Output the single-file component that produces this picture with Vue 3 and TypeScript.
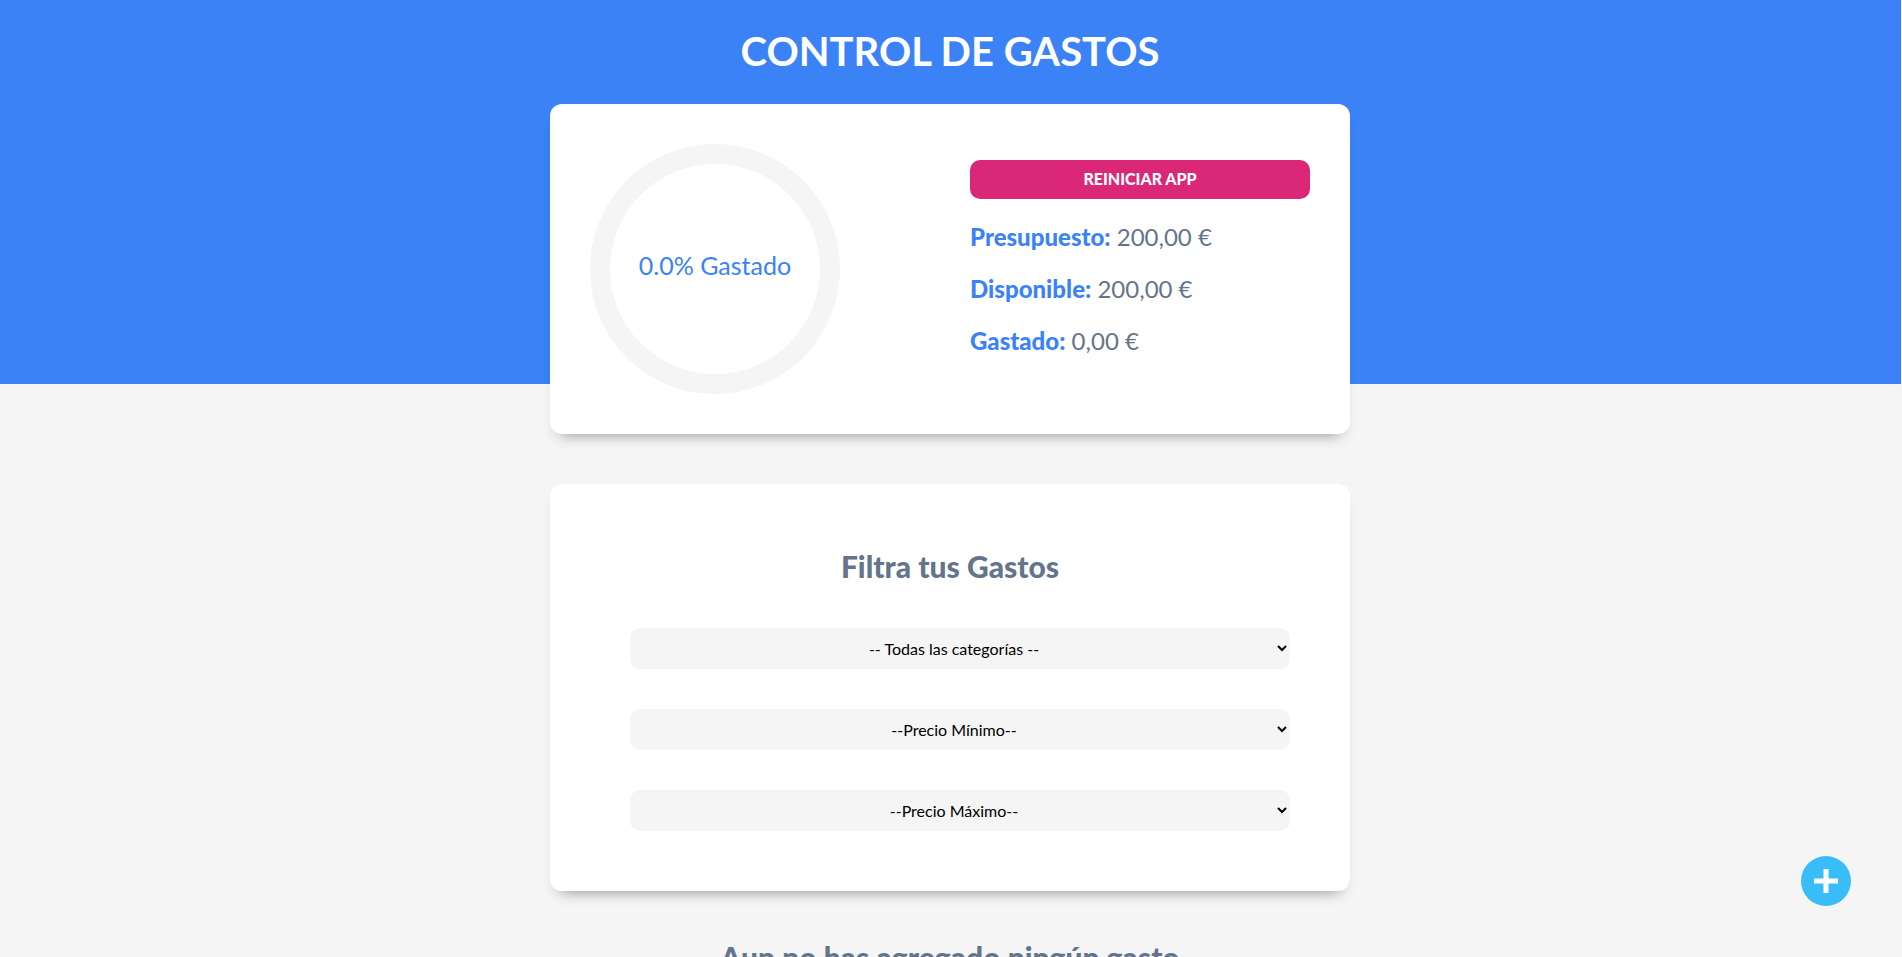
<script setup lang="ts">
import { ref } from 'vue'

interface Filtro {
  id: string
  etiqueta: string
  vacio: string
  opciones: string[]
}

const presupuesto = ref(200)
const gastado = ref(0)
const filtros: Filtro[] = [
  { id: 'categoria', etiqueta: 'Categoría', vacio: '-- Todas las categorías --', opciones: ['Ahorro', 'Comida', 'Casa', 'Ocio', 'Salud'] },
  { id: 'minimo', etiqueta: 'Precio mínimo', vacio: '--Precio Mínimo--', opciones: ['0', '50', '100'] },
  { id: 'maximo', etiqueta: 'Precio máximo', vacio: '--Precio Máximo--', opciones: ['50', '100', '200'] },
]

const euros = (n: number): string => `${n.toFixed(2).replace('.', ',')} €`
const reiniciar = (): void => {
  gastado.value = 0
}
</script>

<template>
  <div class="app">
    <header class="cabecera">
      <h1>Control de Gastos</h1>
      <section class="tarjeta presupuesto">
        <div class="grafica">
          <svg viewBox="0 0 100 100" aria-hidden="true">
            <circle cx="50" cy="50" r="46" fill="none" stroke="#f5f5f5" stroke-width="8" />
          </svg>
          <span>{{ ((gastado / presupuesto) * 100).toFixed(1) }}% Gastado</span>
        </div>
        <div class="datos">
          <button class="reiniciar" type="button" @click="reiniciar">Reiniciar App</button>
          <p><strong>Presupuesto:</strong> {{ euros(presupuesto) }}</p>
          <p><strong>Disponible:</strong> {{ euros(presupuesto - gastado) }}</p>
          <p><strong>Gastado:</strong> {{ euros(gastado) }}</p>
        </div>
      </section>
    </header>
    <main>
      <form class="tarjeta filtros">
        <h2>Filtra tus Gastos</h2>
        <div class="campos">
          <select v-for="f in filtros" :id="f.id" :key="f.id" :aria-label="f.etiqueta">
            <option value="">{{ f.vacio }}</option>
            <option v-for="o in f.opciones" :key="o" :value="o">{{ o }}</option>
          </select>
        </div>
      </form>
      <h2 class="vacio">Aun no has agregado ningún gasto</h2>
    </main>
    <button class="nuevo" type="button" aria-label="Nuevo gasto">
      <svg viewBox="0 0 50 50" aria-hidden="true">
        <circle cx="25" cy="25" r="25" fill="#38bdf8" />
        <path d="M25 13v24M13 25h24" stroke="#fff" stroke-width="5" />
      </svg>
    </button>
  </div>
</template>

<style>
html {
  background: #f5f5f5;
}
body {
  margin: 0;
  height: 100vh;
  overflow: hidden;
}
</style>

<style scoped>
.app,
.app * {
  box-sizing: border-box;
}
.app {
  margin-right: 1px;
  font-family: Lato, "Liberation Sans", sans-serif;
  color: #64748b;
}
.cabecera,
main {
  padding-right: 1px;
}
.cabecera {
  height: 384px;
  background: #3b82f6;
}
h1 {
  margin: 0;
  padding: 25px 0 27px;
  font-size: 40px;
  line-height: 52px;
  font-weight: 700;
  text-align: center;
  text-transform: uppercase;
  color: #fff;
}
.tarjeta {
  width: 90%;
  max-width: 800px;
  margin: 0 auto;
  background: #fff;
  border-radius: 12px;
  box-shadow: 0 10px 15px -10px rgba(0, 0, 0, 0.45);
}
.presupuesto {
  display: grid;
  grid-template-columns: 1fr 1fr;
  column-gap: 40px;
  align-items: center;
  padding: 40px;
}
.grafica {
  display: grid;
  place-items: center;
  width: 250px;
}
.grafica > * {
  grid-area: 1 / 1;
}
.grafica svg {
  width: 100%;
}
.grafica span {
  padding-bottom: 8px;
  font-size: 25px;
  line-height: 30px;
  color: #3b82f6;
}
.datos {
  padding-bottom: 22px;
}
.reiniciar {
  display: block;
  width: 100%;
  height: 39px;
  margin-bottom: 22px;
  border: 0;
  border-radius: 10px;
  background: #db2777;
  color: #fff;
  font: 900 16px/20px Lato, sans-serif;
  text-transform: uppercase;
}
.datos p {
  margin: 0;
  font-size: 24px;
  line-height: 32px;
}
.datos p + p {
  margin-top: 20px;
}
.datos strong {
  font-weight: 900;
  color: #3b82f6;
}
main {
  padding-top: 100px;
}
.filtros {
  padding: 60px;
}
.campos {
  display: grid;
  gap: 40px;
  padding: 40px 0 0 20px;
}
h2 {
  margin: 0;
  font-size: 30px;
  line-height: 44px;
  font-weight: 900;
  text-align: center;
}
select {
  height: 41px;
  border: 0;
  border-radius: 10px;
  background: #f5f5f5;
  color: #000;
  font: 16px Lato, sans-serif;
  text-align: center;
}
.vacio {
  margin-top: 44px;
}
.nuevo {
  position: fixed;
  right: 51px;
  bottom: 51px;
  width: 50px;
  height: 50px;
  padding: 0;
  border: 0;
  background: none;
}
.nuevo svg {
  display: block;
}
</style>
